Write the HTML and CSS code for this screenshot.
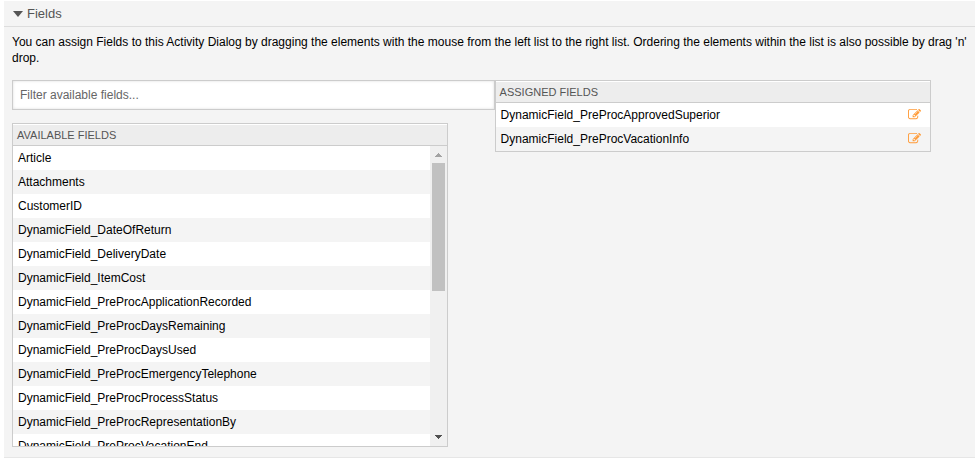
FILE: index.html
```html
<!DOCTYPE html>
<html lang="en">
<head>
<meta charset="utf-8">
<title>Fields</title>
<link rel="stylesheet" href="styles.css">
</head>
<body>
<svg class="sprite" aria-hidden="true">
  <symbol id="edit" viewBox="0 0 1792 1792"><path d="M888 1184l116-116-152-152-116 116v56h96v96h56zm440-720q-16-16-33 1l-350 350q-17 17-1 33t33-1l350-350q17-17 1-33zm80 594v190q0 119-84.5 203.5t-203.5 84.5h-832q-119 0-203.5-84.5t-84.5-203.5v-832q0-119 84.5-203.5t203.5-84.5h832q63 0 117 25 15 7 18 23 3 17-9 29l-49 49q-14 14-32 8-23-6-45-6h-832q-66 0-113 47t-47 113v832q0 66 47 113t113 47h832q66 0 113-47t47-113v-126q0-13 9-22l64-64q15-15 35-7t20 29zm-96-738l288 288-672 672h-288v-288zm444 132l-92 92-288-288 92-92q28-28 68-28t68 28l152 152q28 28 28 68t-28 68z"/></symbol>
</svg>
<section class="widget">
  <header class="widget-header">
    <svg class="caret" viewBox="0 0 10 6"><path d="M0 0h10L5 6z"/></svg>
    <h2>Fields</h2>
  </header>
  <div class="content">
    <p class="hint">You can assign Fields to this Activity Dialog by dragging the elements with the mouse from the left list to the right list. Ordering the elements within the list is also possible by drag 'n' drop.</p>
    <div class="columns">
      <div class="available">
        <input class="filter" type="text" placeholder="Filter available fields...">
        <div class="box">
          <h3>AVAILABLE FIELDS</h3>
          <div class="scroller">
            <ul>
              <li>Article</li>
              <li>Attachments</li>
              <li>CustomerID</li>
              <li>DynamicField_DateOfReturn</li>
              <li>DynamicField_DeliveryDate</li>
              <li>DynamicField_ItemCost</li>
              <li>DynamicField_PreProcApplicationRecorded</li>
              <li>DynamicField_PreProcDaysRemaining</li>
              <li>DynamicField_PreProcDaysUsed</li>
              <li>DynamicField_PreProcEmergencyTelephone</li>
              <li>DynamicField_PreProcProcessStatus</li>
              <li>DynamicField_PreProcRepresentationBy</li>
              <li>DynamicField_PreProcVacationEnd</li>
            </ul>
            <div class="scrollbar">
              <svg class="up" viewBox="0 0 17 17" shape-rendering="crispEdges"><path d="M8 7h1v1h1v1h1v1h1v1H5v-1h1V9h1V8h1z"/></svg>
              <div class="thumb"></div>
              <svg class="down" viewBox="0 0 17 17" shape-rendering="crispEdges"><path d="M5 6h7v1h-1v1h-1v1H9v1H8V9H7V8H6V7H5z"/></svg>
            </div>
          </div>
        </div>
      </div>
      <div class="box assigned">
        <h3>ASSIGNED FIELDS</h3>
        <ul>
          <li>DynamicField_PreProcApprovedSuperior<svg class="edit"><use href="#edit"/></svg></li>
          <li>DynamicField_PreProcVacationInfo<svg class="edit"><use href="#edit"/></svg></li>
        </ul>
      </div>
    </div>
  </div>
</section>
</body>
</html>
```
FILE: styles.css
```css
* { box-sizing: border-box; }
body {
  margin: 0;
  background: #fff;
  font: 12px/16px "Liberation Sans", Arial, sans-serif;
  color: #000;
  overflow: hidden;
}
h2, h3, p, ul { margin: 0; padding: 0; font-weight: normal; }
ul { list-style: none; }
svg { display: block; }
.sprite { display: none; }
.widget {
  margin: 1px 0 0 4px;
  height: 457px;
  background: #f4f4f4;
  border-bottom: 1px solid #e6e6e6;
}
.widget-header {
  display: flex;
  align-items: center;
  height: 26px;
  padding: 0 9px;
  gap: 4px;
  border-bottom: 1px solid #ddd;
  color: #555;
}
.widget-header h2 { font-size: 13px; }
.caret { width: 10px; height: 6px; margin-top: 1px; fill: #555; }
.content { padding: 7px 0 0 8px; }
.hint { height: 46px; width: 960px; }
.columns { display: flex; align-items: flex-start; }
.available { width: 483px; }
.filter {
  display: block;
  width: 483px;
  height: 30px;
  margin-bottom: 13px;
  padding: 0 7px;
  border: 1px solid #ccc;
  background: #fff;
  box-shadow: inset 0 0 3px #ddd;
  font: inherit;
}
.filter::placeholder { color: #666; opacity: 1; }
.box { width: 436px; border: 1px solid #ccc; }
.box h3 {
  height: 22px;
  padding-left: 4px;
  border-top: 1px solid #fff;
  border-bottom: 1px solid #ccc;
  background: #ededed;
  color: #555;
  font-size: 11px;
  line-height: 21px;
}
.box li {
  display: flex;
  align-items: center;
  justify-content: space-between;
  height: 24px;
  padding: 0 9px 0 5px;
  background: #fff;
}
.box li:nth-child(even) { background: #f4f4f4; }
.assigned h3 { padding-left: 3.6px; }
.assigned li { padding-left: 4.6px; }
.edit { width: 13px; height: 13px; margin-bottom: 1px; fill: #ff9b38; }
.scroller { display: flex; height: 300px; overflow: hidden; }
.scroller ul { flex: 1; }
.scrollbar {
  display: flex;
  flex-direction: column;
  width: 17px;
  background: #f0f0f0;
}
.up, .down { width: 17px; height: 17px; }
.up { fill: #a3a3a3; }
.down { margin-top: auto; fill: #505050; }
.thumb { width: 13px; height: 128px; margin: 0 2px; background: #c1c1c1; }
```
